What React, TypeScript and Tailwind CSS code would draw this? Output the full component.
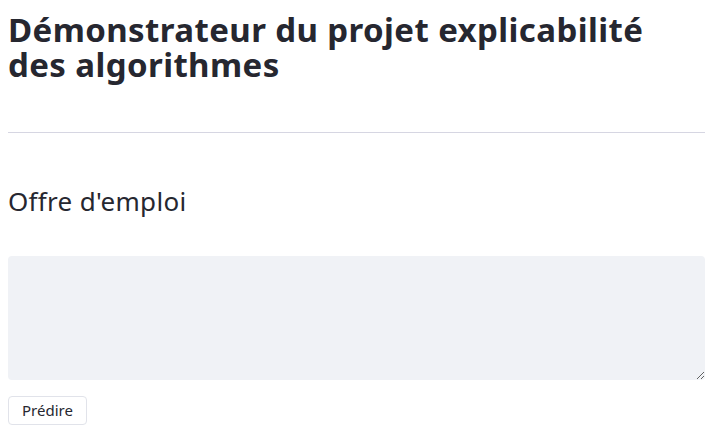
export default function App() {
  return (
    <div className="min-h-screen bg-white px-2 font-['Noto_Sans',sans-serif] text-[#262730]">
      <div className="w-[697px]">
        <h1 className="pr-[40px] pt-[12px] text-[33px] font-bold leading-[35px] tracking-[0.4px] text-[#262730]">
          Démonstrateur du projet explicabilité des algorithmes
        </h1>
        <hr className="mt-[50px] border-t border-[#d6d6e2]" />
        <h2 className="mt-[48px] text-[26px] font-normal leading-[40px] tracking-[0.3px]">Offre d'emploi</h2>
        <textarea
          className="mt-[35px] block h-[124px] w-full rounded-[4px] bg-[#f0f2f6] p-2 text-sm outline-none"
          aria-label="Offre d'emploi"
        />
        <button className="mt-[16px] rounded-[4px] border border-[#e1e3ea] bg-white px-[13px] py-[3px] text-[15px] leading-[21px] text-[#262730]">
          Prédire
        </button>
      </div>
    </div>
  );
}
